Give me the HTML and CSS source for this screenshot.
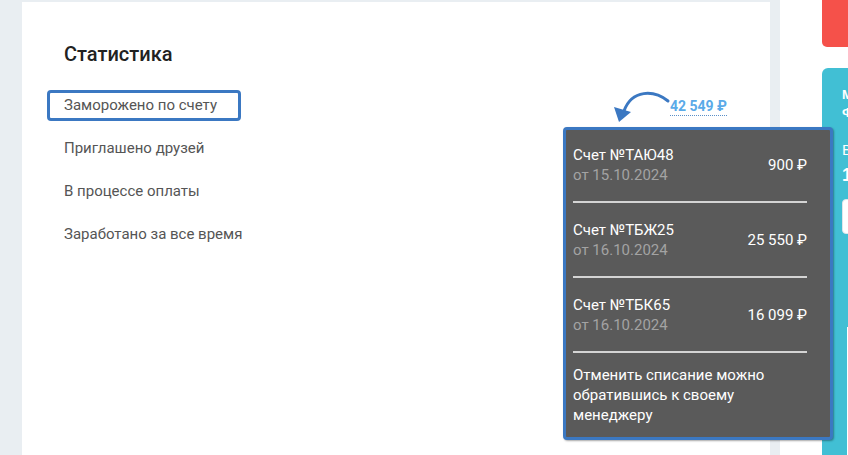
FILE: index.html
```html
<!DOCTYPE html>
<html lang="ru">
<head>
<meta charset="utf-8">
<title>Статистика</title>
<link rel="stylesheet" href="styles.css">
</head>
<body>
<div class="page">
  <div class="gutter"></div>
  <main class="card">
    <h2 class="title">Статистика</h2>
    <ul class="stats">
      <li class="stat">
        <span class="label label-active">Заморожено по счету</span>
        <span class="value">42 549 ₽</span>
      </li>
      <li class="stat"><span class="label">Приглашено друзей</span></li>
      <li class="stat"><span class="label">В процессе оплаты</span></li>
      <li class="stat"><span class="label">Заработано за все время</span></li>
    </ul>
    <svg class="arrow" width="60" height="40" viewBox="0 0 60 40">
      <path d="M56 13 C 42 2, 20 1, 12 23" fill="none" stroke="#3b78c2" stroke-width="3" stroke-linecap="round"/>
      <polygon points="7,34 2,19 19,24" fill="#3b78c2"/>
    </svg>
    <div class="tooltip">
      <div class="bill">
        <div class="bill-info">
          <div class="bill-name">Счет №ТАЮ48</div>
          <div class="bill-date">от 15.10.2024</div>
        </div>
        <div class="bill-sum">900 ₽</div>
      </div>
      <div class="bill">
        <div class="bill-info">
          <div class="bill-name">Счет №ТБЖ25</div>
          <div class="bill-date">от 16.10.2024</div>
        </div>
        <div class="bill-sum">25 550 ₽</div>
      </div>
      <div class="bill">
        <div class="bill-info">
          <div class="bill-name">Счет №ТБК65</div>
          <div class="bill-date">от 16.10.2024</div>
        </div>
        <div class="bill-sum">16 099 ₽</div>
      </div>
      <p class="note">Отменить списание можно обратившись к своему менеджеру</p>
    </div>
  </main>
  <div class="middle"></div>
  <aside class="side">
    <div class="alert"></div>
    <div class="promo">
      <div class="promo-title">Мо<br>Фи</div>
      <div class="promo-label">Ва</div>
      <div class="promo-num">1 2</div>
      <div class="promo-input"></div>
      <div class="promo-box"></div>
    </div>
  </aside>
</div>
</body>
</html>
```

FILE: styles.css
```css
* { box-sizing: border-box; }
html, body { margin: 0; padding: 0; }
body {
  background: #e9eef2;
  font-family: Roboto, "Liberation Sans", Arial, sans-serif;
  width: 848px;
  height: 455px;
  overflow: hidden;
}
.page {
  display: flex;
  height: 455px;
}
.gutter { width: 22px; flex: none; }
.card {
  position: relative;
  width: 748px;
  flex: none;
  margin-top: 2px;
  background: #fff;
  padding: 40px 43px 0 42px;
}
.title {
  margin: 0 0 24px;
  font-size: 20px;
  line-height: 24px;
  font-weight: 500;
  color: #222;
}
.stats {
  list-style: none;
  margin: 0;
  padding: 0;
  display: flex;
  flex-direction: column;
  gap: 12px;
}
.stat {
  display: flex;
  justify-content: space-between;
  align-items: center;
  height: 31px;
}
.label {
  margin-left: -17px;
  padding: 4px 22px 4px 15px;
  border: 2px solid transparent;
  border-radius: 4px;
  font-size: 15px;
  line-height: 19px;
  color: #555;
}
.label-active { border: 3px solid #3b78c2; padding: 3px 21px 3px 14px; }
.value {
  font-size: 14px;
  font-weight: 700;
  color: #5aaae8;
  line-height: 17px;
  border-bottom: 1px dotted #5a8fc8;
  margin-top: 3px;
}
.arrow {
  position: absolute;
  left: 590px;
  top: 86px;
}
.tooltip {
  position: absolute;
  left: 541px;
  top: 125px;
  width: 270px;
  background: #5a5a5a;
  border: 3px solid #3b78c2;
  border-radius: 4px;
  padding: 0 23px 0 7px;
  box-shadow: 1px 1px 2px rgba(0,0,0,.35);
  color: #fff;
  z-index: 2;
}
.bill {
  display: flex;
  justify-content: space-between;
  align-items: center;
  padding: 17px 0 16px;
  border-bottom: 2px solid #d4d4d4;
}
.bill:first-child { padding-top: 15px; }
.bill-name {
  font-size: 15px;
  line-height: 20px;
  color: #fff;
}
.bill-date {
  font-size: 15px;
  line-height: 20px;
  color: #a3a3a3;
}
.bill-sum {
  font-size: 15px;
  line-height: 20px;
  padding-bottom: 1px;
}
.note {
  margin: 0;
  padding: 12px 0 12px;
  font-size: 15px;
  line-height: 20px;
  color: #fff;
}
.middle {
  width: 42px;
  flex: none;
  margin-left: 10px;
  background: #fff;
}
.side {
  width: 60px;
  flex: none;
  display: flex;
  flex-direction: column;
  gap: 21px;
  background: #fff;
}
.alert {
  height: 47px;
  background: #f5514a;
  border-bottom-left-radius: 5px;
}
.promo {
  flex: 1;
  background: #41bfd4;
  border-top-left-radius: 6px;
  padding: 18px 0 0 20px;
  color: #fff;
  font-family: "Liberation Sans", Arial, sans-serif;
  overflow: hidden;
  white-space: nowrap;
}
.promo-title {
  font-size: 13px;
  font-weight: 700;
  line-height: 18px;
}
.promo-label {
  margin-top: 18px;
  font-size: 15px;
  line-height: 20px;
}
.promo-num {
  margin-top: 4px;
  font-size: 18px;
  font-weight: 700;
  line-height: 22px;
}
.promo-input {
  margin-top: 13px;
  height: 35px;
  background: #fff;
  border-radius: 4px;
  border: 1px solid #dfe5ea;
}
.promo-box {
  margin: 93px 0 0 5px;
  height: 200px;
  background: #fff;
}
```
